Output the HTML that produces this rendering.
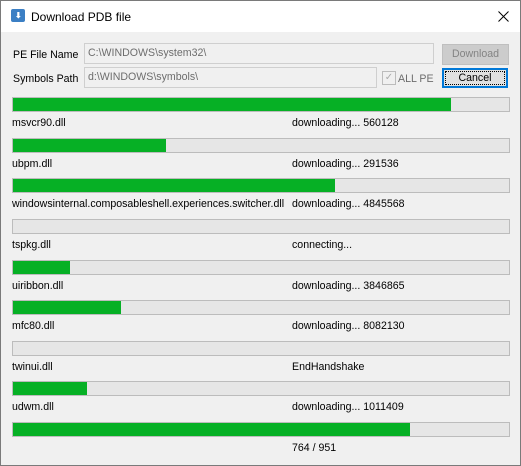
<!DOCTYPE html>
<html><head><style>
body{margin:0;width:521px;height:466px;overflow:hidden;font-family:"Liberation Sans",sans-serif;font-size:10.6px;color:#000}
.win{position:absolute;left:0;top:0;width:519px;height:464px;border:1px solid #7a7a7a;background:#f0f0f0}
.title{position:absolute;left:0;top:0;width:519px;height:31px;background:#fff}
.abs{position:absolute}
.bar{position:absolute;left:11px;width:496px;height:13px;background:#e6e6e6;border:1px solid #bcbcbc}
.bar i{position:absolute;left:0;top:0;height:13px;background:#06b025}
.field{position:absolute;background:#f0f0f0;border:1px solid #cfcfcf;color:#6d6d6d;padding-left:3px;line-height:19px;box-sizing:border-box}
.lbl{position:absolute;white-space:nowrap}
</style></head><body>
<div class="win">
<div class="title">
 <div class="abs" style="left:10px;top:8px;width:14px;height:13px;background:#3b7fc4;border-radius:2px"></div>
 <div class="abs" style="left:14px;top:10px;color:#fff;font-size:8px;font-weight:bold">⬇</div>
 <div class="lbl" style="left:30px;top:9px;font-size:12px">Download PDB file</div>
 <svg class="abs" style="left:497px;top:10px" width="11" height="11"><path d="M0.5 0.5L10.5 10.5M10.5 0.5L0.5 10.5" stroke="#000" stroke-width="1"/></svg>
</div>
<div class="lbl" style="left:12px;top:48px">PE File Name</div>
<div class="lbl" style="left:12px;top:72px">Symbols Path</div>
<div class="field" style="left:83px;top:42px;width:350px;height:21px">C:\WINDOWS\system32\</div>
<div class="field" style="left:83px;top:66px;width:293px;height:21px">d:\WINDOWS\symbols\</div>
<div class="abs" style="left:441px;top:43px;width:65px;height:19px;background:#ccc;border:1px solid #bfbfbf;color:#838383;text-align:center;line-height:19px">Download</div>
<div class="abs" style="left:381px;top:70px;width:12px;height:12px;border:1px solid #bcbcbc;background:#f0f0f0;color:#aaa;font-size:10px;line-height:12px;text-align:center">✓</div>
<div class="lbl" style="left:397px;top:72px;color:#6d6d6d">ALL PE</div>
<div class="abs" style="left:441px;top:67px;width:62px;height:16px;background:#e1e1e1;border:2px solid #0078d7;text-align:center;line-height:16px"><div style="position:absolute;left:1px;top:1px;right:1px;bottom:1px;border:1px dotted #000"></div>Cancel</div>

<div class="bar" style="top:96px"><i style="width:438px"></i></div>
<div class="lbl" style="left:11px;top:116px">msvcr90.dll</div><div class="lbl" style="left:291px;top:116px">downloading... 560128</div>
<div class="bar" style="top:137px"><i style="width:153px"></i></div>
<div class="lbl" style="left:11px;top:157px">ubpm.dll</div><div class="lbl" style="left:291px;top:157px">downloading... 291536</div>
<div class="bar" style="top:177px"><i style="width:322px"></i></div>
<div class="lbl" style="left:11px;top:197px">windowsinternal.composableshell.experiences.switcher.dll</div><div class="lbl" style="left:291px;top:197px">downloading... 4845568</div>
<div class="bar" style="top:218px"></div>
<div class="lbl" style="left:11px;top:238px">tspkg.dll</div><div class="lbl" style="left:291px;top:238px">connecting...</div>
<div class="bar" style="top:259px"><i style="width:57px"></i></div>
<div class="lbl" style="left:11px;top:279px">uiribbon.dll</div><div class="lbl" style="left:291px;top:279px">downloading... 3846865</div>
<div class="bar" style="top:299px"><i style="width:108px"></i></div>
<div class="lbl" style="left:11px;top:319px">mfc80.dll</div><div class="lbl" style="left:291px;top:319px">downloading... 8082130</div>
<div class="bar" style="top:340px"></div>
<div class="lbl" style="left:11px;top:360px">twinui.dll</div><div class="lbl" style="left:291px;top:360px">EndHandshake</div>
<div class="bar" style="top:380px"><i style="width:74px"></i></div>
<div class="lbl" style="left:11px;top:400px">udwm.dll</div><div class="lbl" style="left:291px;top:400px">downloading... 1011409</div>
<div class="bar" style="top:421px"><i style="width:397px"></i></div>
<div class="lbl" style="left:291px;top:441px">764 / 951</div>
</div>
</body></html>
